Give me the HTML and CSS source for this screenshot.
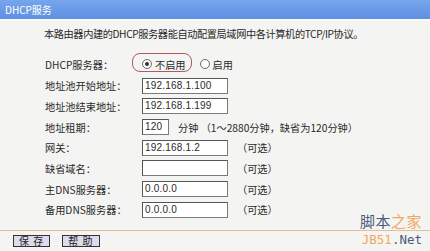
FILE: index.html
```html
<!DOCTYPE html>
<html lang="zh-CN">

<head>
    <meta charset="UTF-8">
    <title>DHCP服务</title>
    <link rel="stylesheet" href="styles.css">
</head>

<body>
    <div class="title">DHCP服务</div>
    <div class="panel">
        <p class="intro">本路由器内建的DHCP服务器能自动配置局域网中各计算机的TCP/IP协议。</p>
        <div class="form">
            <div class="row radio-row">
                <span class="label">DHCP服务器：</span>
                <span class="choices">
                    <span class="mark"></span>
                    <span class="radio on"></span><span class="opt">不启用</span>
                    <span class="radio"></span><span class="opt">启用</span>
                </span>
            </div>
            <div class="row">
                <span class="label">地址池开始地址：</span>
                <span class="field">192.168.1.100</span>
            </div>
            <div class="row">
                <span class="label">地址池结束地址：</span>
                <span class="field">192.168.1.199</span>
            </div>
            <div class="row">
                <span class="label">地址租期：</span>
                <span class="field short">120</span>
                <span class="note">分钟 （1～2880分钟，缺省为120分钟）</span>
            </div>
            <div class="row">
                <span class="label">网关：</span>
                <span class="field">192.168.1.2</span>
                <span class="note">（可选）</span>
            </div>
            <div class="row">
                <span class="label">缺省域名：</span>
                <span class="field"></span>
                <span class="note">（可选）</span>
            </div>
            <div class="row">
                <span class="label">主DNS服务器：</span>
                <span class="field">0.0.0.0</span>
                <span class="note">（可选）</span>
            </div>
            <div class="row">
                <span class="label">备用DNS服务器：</span>
                <span class="field">0.0.0.0</span>
                <span class="note">（可选）</span>
            </div>
        </div>
    </div>
    <div class="footer">
        <div class="logo">
            <div class="logo-cn"><span class="dark">脚本</span><span class="orange">之家</span></div>
            <div class="logo-en"><span class="orange">JB51</span><span class="dark">.Net</span></div>
        </div>
        <div class="actions">
            <button class="btn">保 存</button>
            <button class="btn">帮 助</button>
        </div>
    </div>
</body>

</html>
```

FILE: styles.css
```css
body {
    margin: 0;
    background: #f4f4f2;
    font-family: "Noto Sans CJK SC", "Liberation Sans", sans-serif;
    font-size: 10.2px;
    color: #2a2a2a;
}

.title {
    height: 19px;
    line-height: 19px;
    padding-left: 5px;
    background: linear-gradient(#77a5ee, #5f90e0);
    color: #fff;
    font-size: 10px;
    border-bottom: 2px solid #fafafa;
}

.panel {
    padding-top: 6px;
}

.intro {
    margin: 0 0 0 44px;
    height: 14px;
    line-height: 14px;
    letter-spacing: -0.4px;
}

.form {
    margin-top: 12px;
}

.row {
    display: flex;
    align-items: center;
    height: 20.67px;
    padding-left: 45px;
}

.radio-row {
    height: 22px;
    margin-bottom: 0.5px;
}

.label {
    width: 97px;
}

.choices {
    position: relative;
    display: flex;
    align-items: center;
}

.mark {
    position: absolute;
    left: -10px;
    top: -4px;
    width: 58px;
    height: 17px;
    border: 1.5px solid #b05868;
    border-radius: 8px;
}

.radio {
    width: 8px;
    height: 8px;
    border: 1px solid #6a6a6a;
    border-radius: 50%;
    background: #fff;
    margin-right: 3px;
    position: relative;
}

.radio.on::after {
    content: "";
    position: absolute;
    left: 2px;
    top: 2px;
    width: 4px;
    height: 4px;
    border-radius: 50%;
    background: #333;
}

.opt {
    margin-right: 14px;
}

.field {
    box-sizing: border-box;
    width: 86px;
    height: 16px;
    line-height: 14px;
    padding-left: 2px;
    background: #fff;
    border: 1px solid #7a7a7a;
    border-top-color: #555;
    border-left-color: #555;
    font-family: "Liberation Sans", sans-serif;
    font-size: 10px;
    letter-spacing: 0.2px;
}

.field.short {
    width: 27px;
}

.note {
    margin-left: 9px;
}

.footer {
    position: relative;
    margin-top: 10px;
    border-top: 1px solid #e2bf98;
}

.actions {
    display: flex;
    gap: 12px;
    padding: 4px 0 0 13px;
}

.btn {
    height: 12px;
    padding: 0 5px;
    line-height: 10px;
    font-family: "Noto Sans CJK SC", sans-serif;
    font-size: 10px;
    letter-spacing: 1px;
    color: #222;
    background: #dcdcec;
    border: 1px solid #333;
}

.logo {
    position: absolute;
    right: 8px;
    top: -18px;
    text-align: right;
}

.logo-cn {
    font-size: 15px;
    line-height: 16px;
    letter-spacing: 0.5px;
}

.logo-en {
    font-family: "DejaVu Sans Mono", monospace;
    font-size: 12.5px;
    line-height: 15px;
    margin-top: 3px;
}

.dark {
    color: #4a5a78;
}

.orange {
    color: #f0a860;
}
```
